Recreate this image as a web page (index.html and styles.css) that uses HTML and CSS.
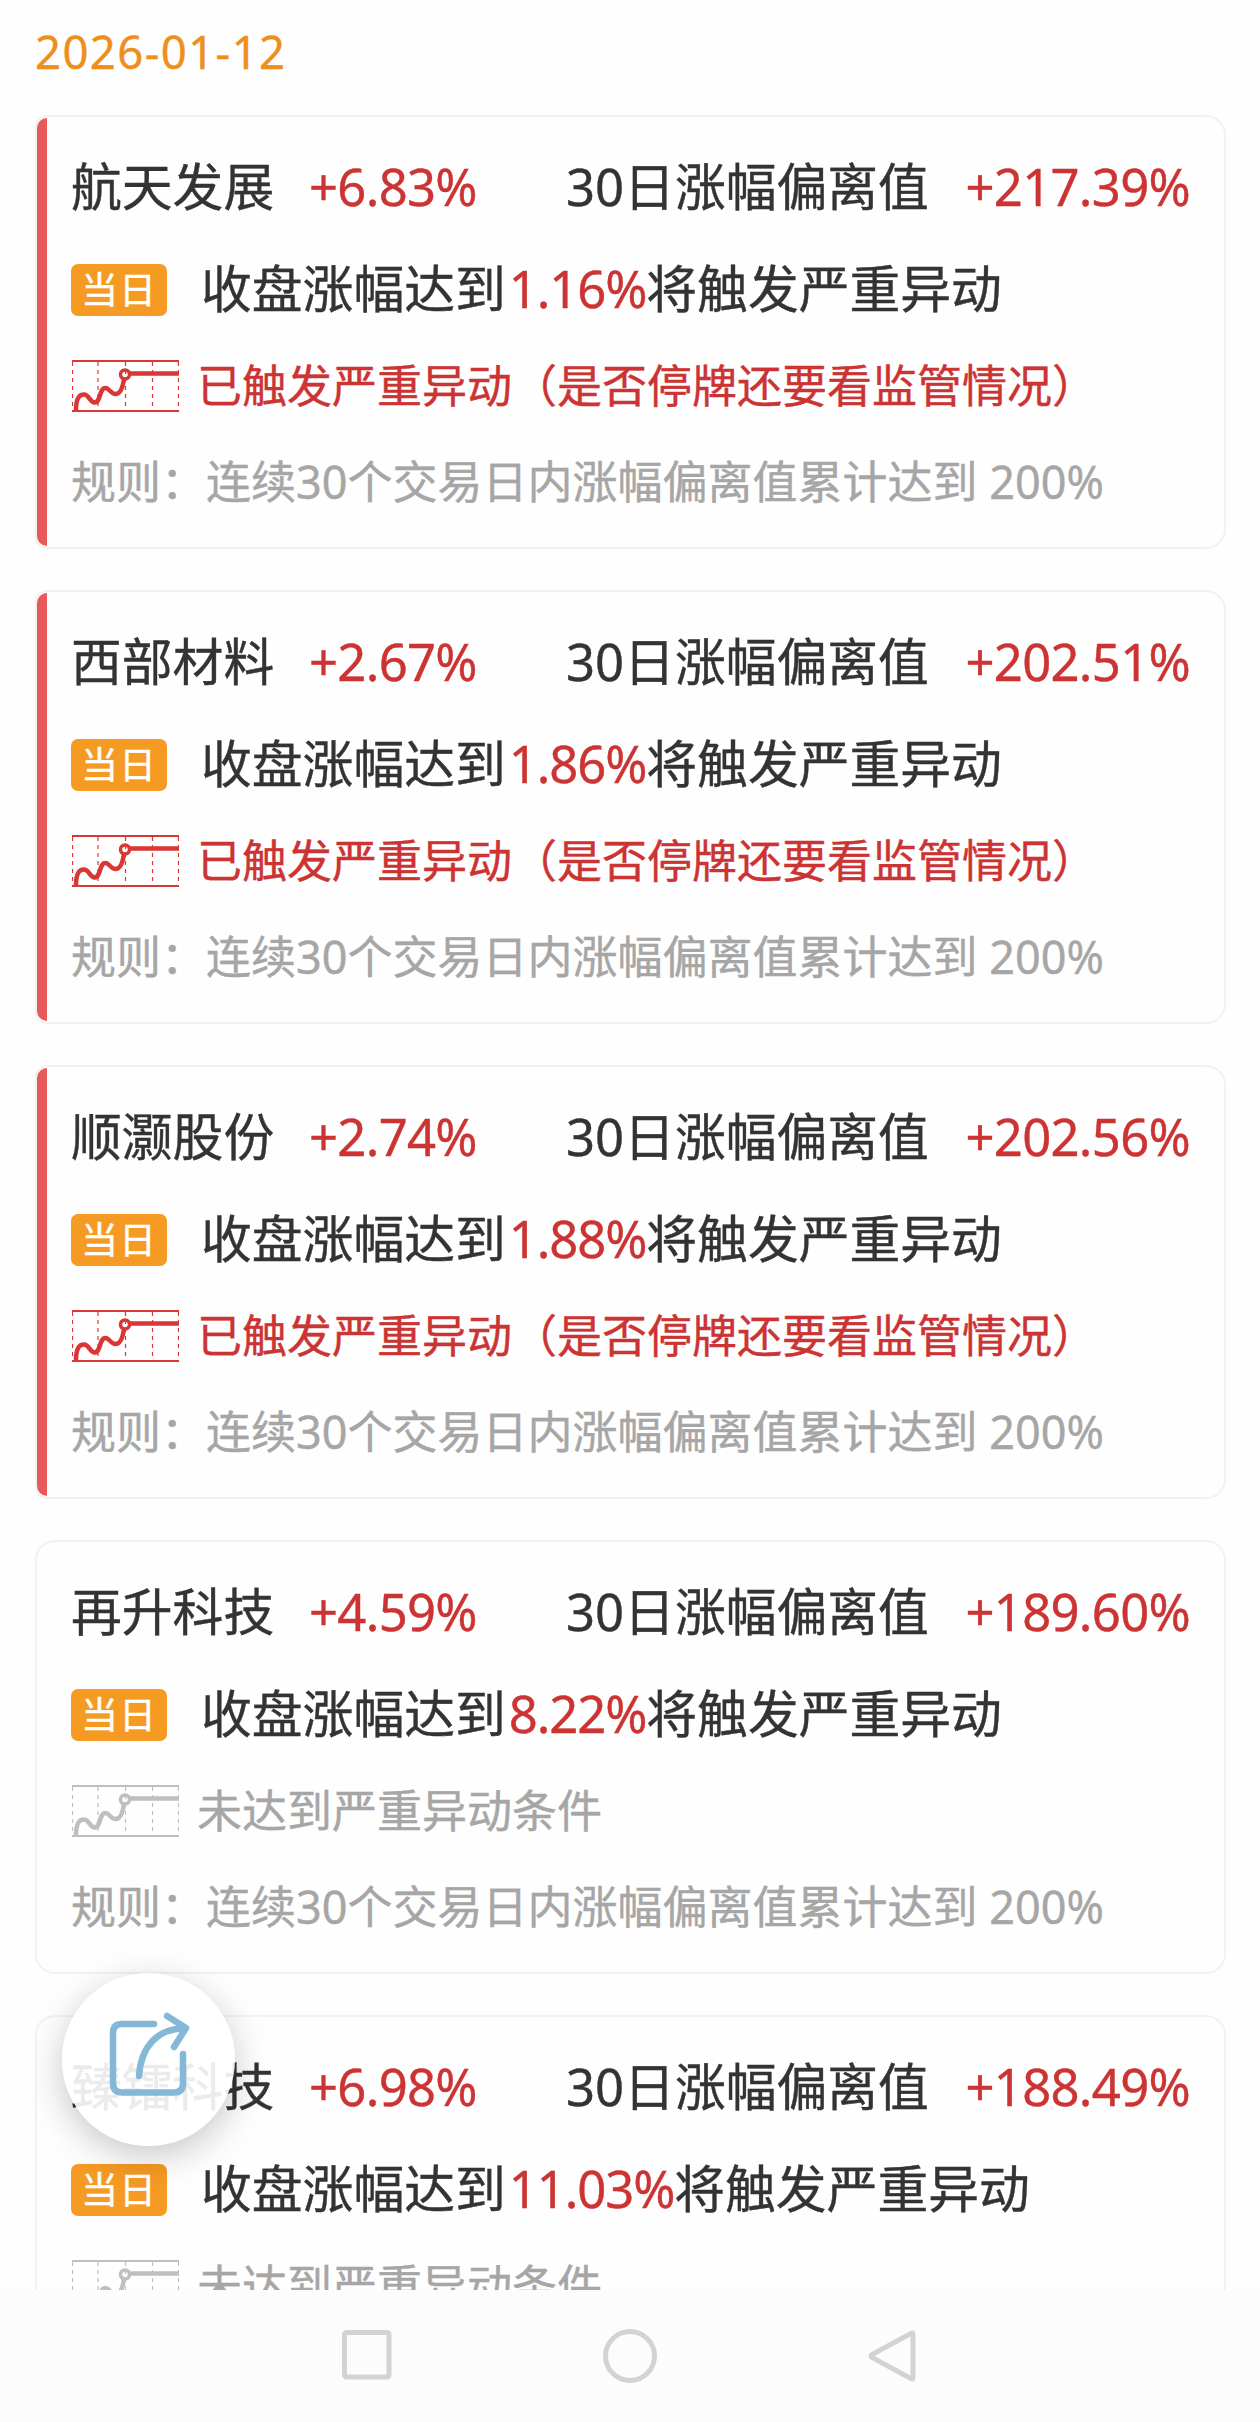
FILE: index.html
```
<!DOCTYPE html>
<html lang="zh-CN">
<head>
    <meta charset="UTF-8">
    <title>严重异动</title>
    <link rel="stylesheet" href="styles.css">
</head>

<body>
    <!-- trend icon shared by all cards -->
    <svg class="defs" width="0" height="0">
        <symbol id="trend" viewBox="0 0 107 52">
            <path d="M.5 2V50M26 2V50M53.5 2V50M80.5 2V50M106.5 2V50" fill="none" stroke="currentColor" stroke-width="1.2" stroke-dasharray="4 4"/>
            <path d="M0 1H107M0 51H107" fill="none" stroke="currentColor" stroke-width="2"/>
            <path d="M4 50C4 40 7 34.500 12 34.500C17 34.500 18 42.500 22.500 42.500C29 42.500 27 28 33.500 28C37 28 39 34 43.500 34C49 34 51 26 52 19M58 13.500H107" fill="none" stroke="currentColor" stroke-width="4.5"/>
            <circle cx="53" cy="14.500" r="4.500" fill="none" stroke="currentColor" stroke-width="3.500"/>
        </symbol>
    </svg>

    <div id="list">
        <div class="date">2026-01-12</div>

        <div class="card hit">
            <div class="bar"></div>
            <div class="content">
                <div class="row head">
                    <span class="name">航天发展</span>
                    <span class="rate">+6.83%</span>
                    <span class="label">30日涨幅偏离值</span>
                    <span class="value">+217.39%</span>
                </div>
                <div class="row today">
                    <span class="badge">当日</span>
                    <span class="text">收盘涨幅达到<em>1.16%</em>将触发严重异动</span>
                </div>
                <div class="row status">
                    <svg class="trend"><use href="#trend"/></svg>
                    <span class="text">已触发严重异动（是否停牌还要看监管情况）</span>
                </div>
                <div class="row rule">规则：连续30个交易日内涨幅偏离值累计达到 200%</div>
            </div>
        </div>

        <div class="card hit">
            <div class="bar"></div>
            <div class="content">
                <div class="row head">
                    <span class="name">西部材料</span>
                    <span class="rate">+2.67%</span>
                    <span class="label">30日涨幅偏离值</span>
                    <span class="value">+202.51%</span>
                </div>
                <div class="row today">
                    <span class="badge">当日</span>
                    <span class="text">收盘涨幅达到<em>1.86%</em>将触发严重异动</span>
                </div>
                <div class="row status">
                    <svg class="trend"><use href="#trend"/></svg>
                    <span class="text">已触发严重异动（是否停牌还要看监管情况）</span>
                </div>
                <div class="row rule">规则：连续30个交易日内涨幅偏离值累计达到 200%</div>
            </div>
        </div>

        <div class="card hit">
            <div class="bar"></div>
            <div class="content">
                <div class="row head">
                    <span class="name">顺灏股份</span>
                    <span class="rate">+2.74%</span>
                    <span class="label">30日涨幅偏离值</span>
                    <span class="value">+202.56%</span>
                </div>
                <div class="row today">
                    <span class="badge">当日</span>
                    <span class="text">收盘涨幅达到<em>1.88%</em>将触发严重异动</span>
                </div>
                <div class="row status">
                    <svg class="trend"><use href="#trend"/></svg>
                    <span class="text">已触发严重异动（是否停牌还要看监管情况）</span>
                </div>
                <div class="row rule">规则：连续30个交易日内涨幅偏离值累计达到 200%</div>
            </div>
        </div>

        <div class="card">
            <div class="content">
                <div class="row head">
                    <span class="name">再升科技</span>
                    <span class="rate">+4.59%</span>
                    <span class="label">30日涨幅偏离值</span>
                    <span class="value">+189.60%</span>
                </div>
                <div class="row today">
                    <span class="badge">当日</span>
                    <span class="text">收盘涨幅达到<em>8.22%</em>将触发严重异动</span>
                </div>
                <div class="row status">
                    <svg class="trend"><use href="#trend"/></svg>
                    <span class="text">未达到严重异动条件</span>
                </div>
                <div class="row rule">规则：连续30个交易日内涨幅偏离值累计达到 200%</div>
            </div>
        </div>

        <div class="card">
            <div class="content">
                <div class="row head">
                    <span class="name">臻镭科技</span>
                    <span class="rate">+6.98%</span>
                    <span class="label">30日涨幅偏离值</span>
                    <span class="value">+188.49%</span>
                </div>
                <div class="row today">
                    <span class="badge">当日</span>
                    <span class="text">收盘涨幅达到<em>11.03%</em>将触发严重异动</span>
                </div>
                <div class="row status">
                    <svg class="trend"><use href="#trend"/></svg>
                    <span class="text">未达到严重异动条件</span>
                </div>
            </div>
        </div>
    </div>

    <div id="share">
        <svg width="173" height="173" viewBox="0 0 173 173" fill="none" stroke="#84b8d6" stroke-width="6.5" stroke-linecap="round" stroke-linejoin="round">
            <path d="M92 51H60Q51 51 51 60V110Q51 119.500 60 119.500H112Q121 119.500 121 110V81"/>
            <path d="M77 103C79 73 96 55.500 122 55.500"/>
            <path d="M105 43L124 55L112 74"/>
        </svg>
    </div>

    <div id="navbar">
        <svg viewBox="0 0 56 56"><rect x="5.500" y="4.500" width="44.500" height="44.500" rx="2"/></svg>
        <svg viewBox="0 0 56 56"><circle cx="28" cy="28" r="24.500"/></svg>
        <svg viewBox="0 0 56 56"><path d="M48 6V50Q48 52 46 50.500L7 29.500Q5 28 7 26.500L46 5.500Q48 4 48 6Z"/></svg>
    </div>
</body>

</html>
```

FILE: styles.css
```
/* General body styles */
body {
    font-family: "Noto Sans", "Noto Sans CJK SC", sans-serif;
    margin: 0;
    height: 2422px;
    overflow: hidden;
    color: #333;
    background-color: #fefefe;
    -webkit-text-stroke: 0.4px;
}

.defs {
    display: block;
}

/* Scrolling list above the navigation bar */
#list {
    height: 2290px;
    padding: 0 34px 0 35px;
    box-sizing: border-box;
    overflow: hidden;
}

.date {
    height: 115px;
    line-height: 102px;
    font-size: 45.5px;
    letter-spacing: 1.4px;
    color: #ee8f1d;
}

/* Cards */
.card {
    display: flex;
    height: 434px;
    margin-bottom: 41px;
    box-sizing: border-box;
    border: 2px solid #f2f2f2;
    border-radius: 20px;
}

.card.hit {
    border-top-left-radius: 12px;
    border-bottom-left-radius: 12px;
}

.bar {
    width: 10px;
    margin: 1px 0;
    border-radius: 10px 0 0 10px;
    background-color: #e85a5a;
}

.content {
    flex: 1;
    padding: 36px 34px 0 34px;
}

.hit .content {
    padding-left: 24px;
}

.row {
    display: flex;
    align-items: center;
    height: 68px;
    margin-bottom: 28px;
    line-height: 68px;
    white-space: nowrap;
}

.head,
.today {
    font-size: 50.8px;
}

.head {
    display: grid;
    grid-template-columns: 238px 257px 1fr auto;
    margin-bottom: 35px;
    padding-bottom: 3px;
    height: 65px;
}

.rate,
.value,
.today em {
    font-style: normal;
    letter-spacing: -0.7px;
    color: #cc3333;
}

.today em {
    margin-left: 3px;
    letter-spacing: -1.1px;
}

.today .text {
    padding-bottom: 3px;
}

.badge {
    width: 96px;
    height: 52px;
    margin-right: 34px;
    border-radius: 7px;
    font-size: 37px;
    line-height: 51px;
    text-align: center;
    letter-spacing: 1px;
    color: #fff;
    background-color: #f59a23;
}

.status,
.rule {
    font-size: 45px;
    color: #a6a6a6;
}

.status .text,
.rule {
    padding-bottom: 1px;
}

.rule {
    height: 67px;
}

.trend {
    width: 107px;
    height: 52px;
    margin-left: 1px;
    margin-right: 18px;
    color: #bfbfbf;
}

.hit .status {
    color: #cc3333;
}

.hit .trend {
    color: #d93636;
}

/* Floating share button */
#share {
    position: fixed;
    left: 62px;
    top: 1973px;
    width: 173px;
    height: 173px;
    border-radius: 50%;
    background-color: rgba(255, 255, 255, 0.9);
    box-shadow: 0 10px 36px rgba(0, 0, 0, 0.22);
}

/* System navigation bar */
#navbar {
    display: flex;
    justify-content: center;
    align-items: center;
    gap: 207px;
    height: 132px;
    background-color: #fcfcfc;
}

#navbar svg {
    width: 56px;
    height: 56px;
    fill: none;
    stroke: #d3d3d3;
    stroke-width: 5px;
}
```
